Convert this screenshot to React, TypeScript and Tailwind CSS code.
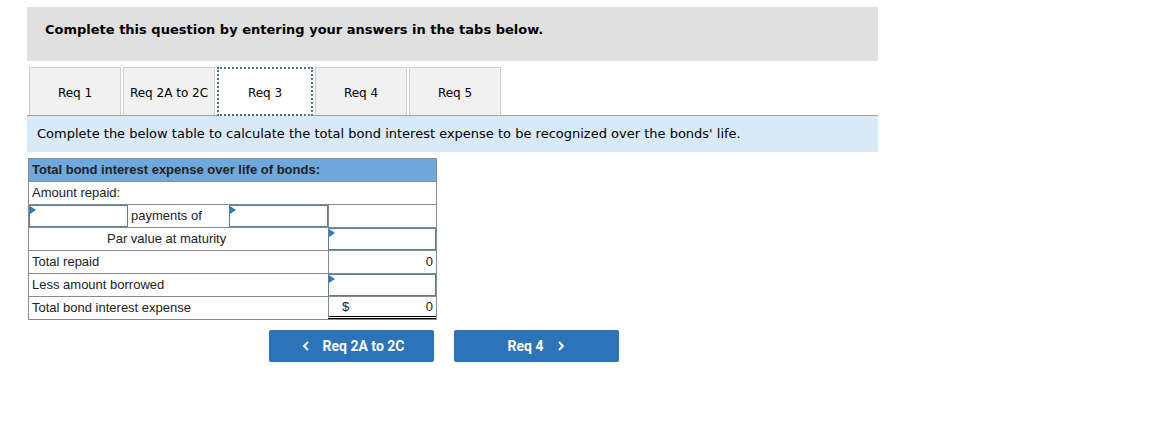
const Flag = () => (
  <span className="absolute left-0 top-0 w-0 h-0 border-t-[4px] border-b-[4px] border-l-[6px] border-t-transparent border-b-transparent border-l-[#2f7bbf]" />
);

const InputCell = ({ className = "" }: { className?: string }) => (
  <div className={`relative h-full border border-[#5b7ea3] bg-white ${className}`}>
    <Flag />
  </div>
);

const tabs = ["Req 1", "Req 2A to 2C", "Req 3", "Req 4", "Req 5"];

const App = () => {
  return (
    <div className="w-[1162px] h-[436px] bg-white pt-[7px] pl-[27px] font-['DejaVu_Sans',sans-serif] text-[#222]">
      {/* HEADER */}
      <div className="w-[851px] h-[54px] bg-[#e0e0e0] pt-[10px] pl-[18px]">
        <span className="text-[13px] font-bold text-black">
          Complete this question by entering your answers in the tabs below.
        </span>
      </div>

      {/* TABS */}
      <div className="flex gap-[2px] pl-[2px] mt-[6px] h-[48px] w-[851px]">
        {tabs.map((t, i) =>
          i === 2 ? (
            <div
              key={t}
              className="w-[96px] h-[49px] bg-white border-2 border-dotted border-[#4d6f8f] flex items-center justify-center pt-[2px] text-[12px] text-black relative z-10"
            >
              {t}
            </div>
          ) : (
            <div
              key={t}
              className="w-[92px] h-full bg-[#f1f1f1] border border-[#cfcfcf] border-b-0 flex items-center justify-center pt-[2px] text-[12px] text-black"
            >
              {t}
            </div>
          )
        )}
      </div>

      {/* INSTRUCTION BAND */}
      <div className="w-[851px] h-[37px] bg-[#d8eaf8] border-t border-[#a3a3a3] flex items-center pl-[10px]">
        <span className="text-[13px] text-black">
          Complete the below table to calculate the total bond interest expense to be recognized over the bonds' life.
        </span>
      </div>

      {/* TABLE */}
      <div className="mt-[6px] ml-[1px] w-[409px] border border-[#8a8a8a] font-['Liberation_Sans',Arial,sans-serif] text-[13px] text-[#222]">
        <div className="h-[23px] bg-[#6fa8dc] border-b border-[#8a8a8a] flex items-center pl-[3px] font-bold">
          Total bond interest expense over life of bonds:
        </div>
        <div className="h-[23px] border-b border-[#8a8a8a] flex items-center pl-[3px]">
          Amount repaid:
        </div>
        <div className="h-[23px] border-b border-[#8a8a8a] flex">
          <InputCell className="w-[99px]" />
          <div className="w-[101px] flex items-center pl-[3px]">payments of</div>
          <InputCell className="w-[99px]" />
          <div className="flex-1 border-l border-[#8a8a8a]" />
        </div>
        <div className="h-[23px] border-b border-[#8a8a8a] flex">
          <div className="w-[299px] flex items-center pl-[78px]">Par value at maturity</div>
          <InputCell className="flex-1" />
        </div>
        <div className="h-[23px] border-b border-[#8a8a8a] flex">
          <div className="w-[299px] flex items-center pl-[3px]">Total repaid</div>
          <div className="flex-1 border-l border-[#8a8a8a] flex items-center justify-end pr-[3px]">0</div>
        </div>
        <div className="h-[23px] border-b border-[#8a8a8a] flex">
          <div className="w-[299px] flex items-center pl-[3px]">Less amount borrowed</div>
          <InputCell className="flex-1" />
        </div>
        <div className="h-[22px] flex">
          <div className="w-[299px] flex items-center pl-[3px]">Total bond interest expense</div>
          <div className="flex-1 border-l border-[#8a8a8a] border-b-[3px] border-b-black border-double flex items-center justify-between pl-[13px] pr-[3px]">
            <span>$</span>
            <span>0</span>
          </div>
        </div>
      </div>

      {/* NAV BUTTONS */}
      <div className="flex gap-[20px] ml-[242px] mt-[10px] font-['Roboto',sans-serif]">
        <button className="w-[165px] h-[32px] bg-[#2c73b9] rounded-[2px] text-white font-bold text-[14px] flex items-center justify-center gap-[13px] pl-[3px]">
          <svg width="8" height="10" viewBox="0 0 8 10">
            <path d="M6 1 L2 5 L6 9" stroke="white" strokeWidth="2" fill="none" />
          </svg>
          <span>Req 2A to 2C</span>
        </button>
        <button className="w-[165px] h-[32px] bg-[#2c73b9] rounded-[2px] text-white font-bold text-[14px] flex items-center justify-center gap-[14px]">
          <span>Req 4</span>
          <svg width="8" height="10" viewBox="0 0 8 10">
            <path d="M2 1 L6 5 L2 9" stroke="white" strokeWidth="2" fill="none" />
          </svg>
        </button>
      </div>
    </div>
  );
};

export default App;
